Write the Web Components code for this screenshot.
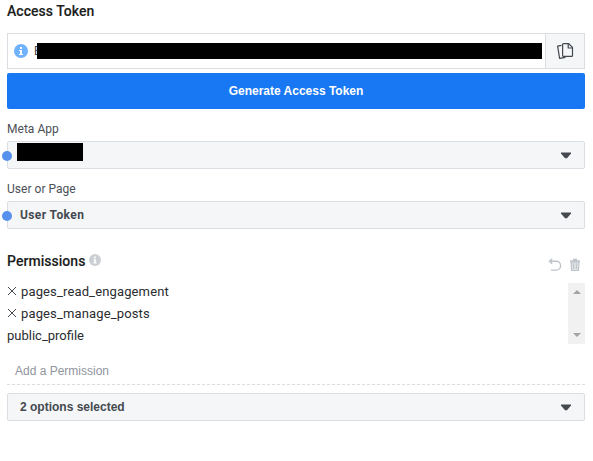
<!DOCTYPE html>
<html lang="en">
<head>
<meta charset="utf-8">
<title>Access Token</title>
<style>
body { margin: 0; background: #fff; font-family: Roboto, "Liberation Sans", sans-serif; color: #1c1e21; }
</style>
</head>
<body>
<token-panel></token-panel>
<script>
const define = (name, html) => customElements.define(name, class extends HTMLElement {
  constructor() {
    super();
    this.attachShadow({ mode: 'open' }).innerHTML = html;
  }
});

define('section-title', `
<style>
:host { display: flex; align-items: center; height: 22px; font-size: 14px; font-weight: 500; letter-spacing: .04px; white-space: nowrap; -webkit-text-stroke: .1px; }
</style><slot></slot>`);

define('info-icon', `
<style>
:host { display: block; flex: none; width: var(--size, 14px); height: var(--size, 14px); color: #6fb2ff; }
svg { display: block; width: 100%; height: 100%; }
</style>
<svg viewBox="0 0 14 14"><circle cx="7" cy="7" r="7" fill="currentColor"/><path d="M6 3h2v2H6zM5 6h3v4h1v1H5v-1h1V7H5z" fill="#fff"/></svg>`);

define('token-field', `
<style>
:host { display: grid; grid-template-columns: 1fr 39px; box-sizing: border-box; height: 36px; border: 1px solid #dadde1; }
.value { display: flex; align-items: center; padding-left: 6px; font-size: 12px; min-width: 0; }
.text { display: flex; align-items: center; margin-left: 6px; }
.letter { width: 9px; color: #444950; }
.redaction { width: 505px; height: 16px; margin-left: -6px; background: #000; position: relative; }
.copy { display: flex; align-items: center; justify-content: center; border-left: 1px solid #dadde1; background: #f5f6f7; }
svg { display: block; }
</style>
<div class="value"><info-icon></info-icon><div class="text"><span class="letter">E</span><div class="redaction"></div></div></div>
<div class="copy"><svg width="18" height="18" viewBox="0 0 18 18" fill="none" stroke="#444950" stroke-width="1.2" stroke-linejoin="round"><path d="M5.5 3.4 1.6 4.2 3.6 16.3 9.5 15.4"/><path d="M7.5 1.6h5.2l3.8 3.9v8q0 .9-.9.9H7.5q-.9 0-.9-.9v-11q0-.9.9-.9z" fill="#f5f6f7"/><path d="M12.2 1.8v4.2h4.2"/></svg></div>`);

define('primary-button', `
<style>
:host { display: flex; align-items: center; justify-content: center; height: 36px; border-radius: 2px; background: #1877f2; color: #fff; font: bold 12px "Liberation Sans", Arial, sans-serif; }
</style><slot></slot>`);

define('select-box', `
<style>
:host { display: flex; position: relative; align-items: center; justify-content: space-between; box-sizing: border-box; height: 28px; padding: 0 12px; border: 1px solid #dadde1; border-radius: 2px; background: #f5f6f7; color: #444950; font: bold 12px Roboto, sans-serif; letter-spacing: .4px; }
:host([dotted])::before { content: ""; position: absolute; left: -6px; top: 9px; width: 10px; height: 10px; border-radius: 50%; background: #5890ee; }
:host([arial]) { font-family: "Liberation Sans", Arial, sans-serif; letter-spacing: 0; }
svg { display: block; }
</style><slot></slot>
<svg width="12" height="7" viewBox="0 0 12 7"><path d="M1 .5h10v1L7 6.2H5L1 1.5z" fill="#444950"/></svg>`);

define('field-label', `
<style>
:host { display: flex; align-items: center; height: 20px; font-size: 12px; color: #4b4f56; letter-spacing: .03px; }
</style><slot></slot>`);

define('permission-item', `
<style>
:host { display: flex; flex: none; align-items: center; height: 22px; font-size: 13px; gap: 4px; color: #2a2c30; }
:host([removable]) { letter-spacing: .14px; }
svg { display: none; margin-top: -1px; }
:host([removable]) svg { display: block; }
</style>
<svg width="10" height="10" viewBox="0 0 10 10" fill="none" stroke="#444950" stroke-width="1"><path d="M1 1l8 8M9 1L1 9"/></svg><slot></slot>`);

define('permission-list', `
<style>
:host { display: grid; grid-template: 61px / 1fr 17px; height: 61px; }
.items { display: flex; flex-direction: column; margin-top: -3px; }
.bar { display: flex; box-sizing: border-box; flex-direction: column; justify-content: space-between; align-items: center; background: #f1f1f1; padding: 7px 0; }
svg { display: block; }
</style>
<div class="items"><slot></slot></div>
<div class="bar"><svg width="8" height="4" viewBox="0 0 8 4"><path d="M4 0l4 4H0z" fill="#a3a3a3"/></svg><svg width="8" height="4" viewBox="0 0 8 4"><path d="M4 4l4-4H0z" fill="#a3a3a3"/></svg></div>`);

define('permission-header', `
<style>
:host { display: flex; align-items: center; justify-content: space-between; height: 22px; }
.title, .tools { display: flex; align-items: center; }
.title { gap: 4px; }
info-icon { --size: 12px; color: #ccd0d5; margin-top: -2px; }
.tools { gap: 7px; padding: 8px 4px 0 0; }
svg { display: block; }
</style>
<div class="title"><section-title>Permissions</section-title><info-icon></info-icon></div>
<div class="tools">
<svg width="14" height="14" viewBox="0 0 14 14" fill="none" stroke="#bec3c9" stroke-width="1.4"><path d="M4.2 .8 1.5 3.3 4.2 5.8M1.5 3.3H8.2a4.3 4.3 0 0 1 0 8.8H3"/></svg>
<svg width="12" height="14" viewBox="0 0 12 14" fill="none" stroke="#bec3c9"><path d="M1 3h10M4 1.5h4" stroke-width="1.4"/><path d="M2 4.2l.6 8.3h6.8L10 4.2z" fill="#dfe2e6" stroke-width="1.2"/><path d="M4.6 5.5v5.5M7.4 5.5v5.5"/></svg>
</div>`);

define('permission-input', `
<style>
:host { display: flex; align-items: center; box-sizing: border-box; height: 29px; padding: 0 8px; color: #90949c; font: 12px "Liberation Sans", Arial, sans-serif; background: repeating-linear-gradient(90deg, #dadde1 0 3px, transparent 3px 5px) bottom / 100% 1px no-repeat; }
</style><slot></slot>`);

define('token-panel', `
<style>
:host { display: flex; flex-direction: column; width: 578px; margin-left: 7px; }
token-field { margin-top: 11px; }
primary-button { margin: 4px 0 10px; }
field-label { margin-bottom: 2px; }
.second { margin-top: 10px; }
permission-header { margin: 21px 0 11px; }
permission-input { margin: 12px 0 8px; }
.redaction { width: 66px; height: 18px; margin: -6px 0 0 -3px; background: #000; }
</style>
<section-title>Access Token</section-title>
<token-field></token-field>
<primary-button>Generate Access Token</primary-button>
<field-label>Meta App</field-label>
<select-box dotted><div class="redaction"></div></select-box>
<field-label class="second">User or Page</field-label>
<select-box dotted>User Token</select-box>
<permission-header></permission-header>
<permission-list>
<permission-item removable>pages_read_engagement</permission-item>
<permission-item removable>pages_manage_posts</permission-item>
<permission-item>public_profile</permission-item>
</permission-list>
<permission-input>Add a Permission</permission-input>
<select-box arial>2 options selected</select-box>`);
</script>
</body>
</html>
